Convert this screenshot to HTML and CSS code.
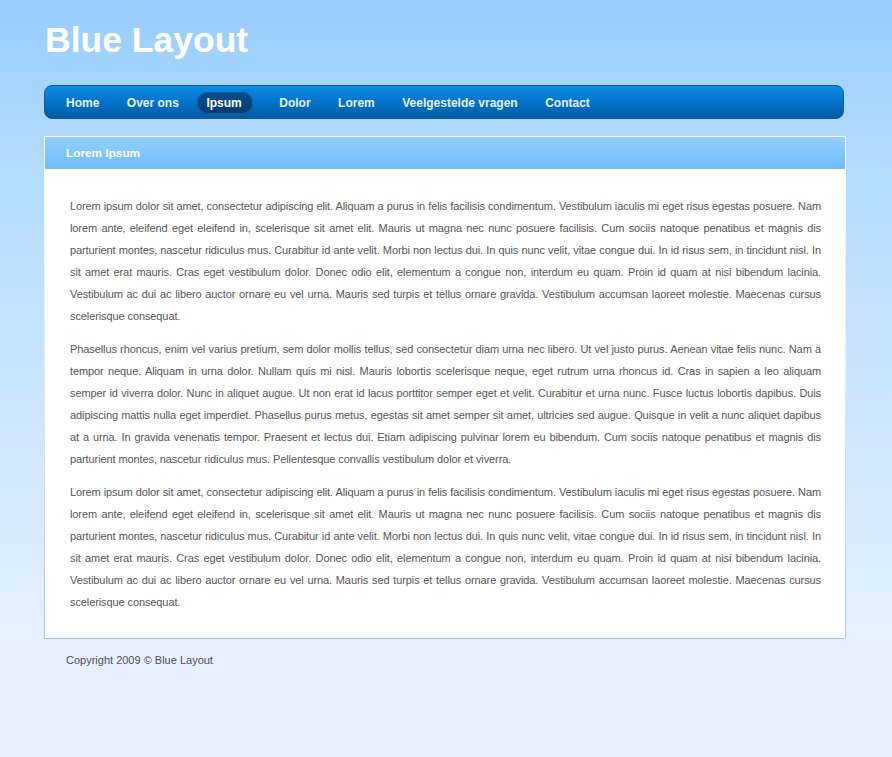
FILE: index.html
```html
<!DOCTYPE html>
<html>
<head>
<meta charset="utf-8">
<title>Blue Layout</title>
<link rel="stylesheet" href="styles.css">
</head>
<body>
<div class="wrap">
  <h1 class="logo">Blue Layout</h1>
  <nav class="nav">
    <a href="#">Home</a>
    <a href="#">Over ons</a>
    <a href="#" class="active">Ipsum</a>
    <a href="#">Dolor</a>
    <a href="#">Lorem</a>
    <a href="#">Veelgestelde vragen</a>
    <a href="#">Contact</a>
  </nav>
  <div class="box">
    <div class="box-head">Lorem Ipsum</div>
    <div class="box-body">
      <p>Lorem ipsum dolor sit amet, consectetur adipiscing elit. Aliquam a purus in felis facilisis condimentum. Vestibulum iaculis mi eget risus egestas posuere. Nam lorem ante, eleifend eget eleifend in, scelerisque sit amet elit. Mauris ut magna nec nunc posuere facilisis. Cum sociis natoque penatibus et magnis dis parturient montes, nascetur ridiculus mus. Curabitur id ante velit. Morbi non lectus dui. In quis nunc velit, vitae congue dui. In id risus sem, in tincidunt nisl. In sit amet erat mauris. Cras eget vestibulum dolor. Donec odio elit, elementum a congue non, interdum eu quam. Proin id quam at nisi bibendum lacinia. Vestibulum ac dui ac libero auctor ornare eu vel urna. Mauris sed turpis et tellus ornare gravida. Vestibulum accumsan laoreet molestie. Maecenas cursus scelerisque consequat.</p>
      <p>Phasellus rhoncus, enim vel varius pretium, sem dolor mollis tellus, sed consectetur diam urna nec libero. Ut vel justo purus. Aenean vitae felis nunc. Nam a tempor neque. Aliquam in urna dolor. Nullam quis mi nisl. Mauris lobortis scelerisque neque, eget rutrum urna rhoncus id. Cras in sapien a leo aliquam semper id viverra dolor. Nunc in aliquet augue. Ut non erat id lacus porttitor semper eget et velit. Curabitur et urna nunc. Fusce luctus lobortis dapibus. Duis adipiscing mattis nulla eget imperdiet. Phasellus purus metus, egestas sit amet semper sit amet, ultricies sed augue. Quisque in velit a nunc aliquet dapibus at a urna. In gravida venenatis tempor. Praesent et lectus dui. Etiam adipiscing pulvinar lorem eu bibendum. Cum sociis natoque penatibus et magnis dis parturient montes, nascetur ridiculus mus. Pellentesque convallis vestibulum dolor et viverra.</p>
      <p>Lorem ipsum dolor sit amet, consectetur adipiscing elit. Aliquam a purus in felis facilisis condimentum. Vestibulum iaculis mi eget risus egestas posuere. Nam lorem ante, eleifend eget eleifend in, scelerisque sit amet elit. Mauris ut magna nec nunc posuere facilisis. Cum sociis natoque penatibus et magnis dis parturient montes, nascetur ridiculus mus. Curabitur id ante velit. Morbi non lectus dui. In quis nunc velit, vitae congue dui. In id risus sem, in tincidunt nisl. In sit amet erat mauris. Cras eget vestibulum dolor. Donec odio elit, elementum a congue non, interdum eu quam. Proin id quam at nisi bibendum lacinia. Vestibulum ac dui ac libero auctor ornare eu vel urna. Mauris sed turpis et tellus ornare gravida. Vestibulum accumsan laoreet molestie. Maecenas cursus scelerisque consequat.</p>
    </div>
  </div>
  <div class="footer">Copyright 2009 © Blue Layout</div>
</div>
</body>
</html>
```
FILE: styles.css
```css
html, body {
  margin: 0;
  padding: 0;
}
body {
  min-height: 757px;
  font-family: "Liberation Sans", Arial, sans-serif;
  background: #e6f0fd linear-gradient(to bottom, #97cdfc 0px, #b4dcfd 170px, #e6f0fd 640px) no-repeat;
}
.wrap {
  width: 802px;
  padding-left: 44px;
}
.logo {
  margin: 0;
  padding: 20px 0 0 1px;
  height: 40px;
  line-height: 40px;
  font-size: 35.5px;
  font-weight: bold;
  color: #ffffff;
}
.nav {
  box-sizing: border-box;
  margin-top: 25px;
  width: 800px;
  height: 34px;
  border: 1px solid #1f5488;
  border-radius: 8px;
  background: linear-gradient(to bottom, #0a8be6 0%, #0273c8 50%, #005ca5 100%);
  display: flex;
  align-items: flex-start;
  gap: 9.5px;
  padding: 6px 0 0 12px;
}
.nav a {
  display: block;
  height: 22px;
  line-height: 23px;
  padding: 0 9px;
  border-radius: 11px;
  color: #e6f2ff;
  font-size: 12px;
  font-weight: bold;
  text-decoration: none;
}
.nav a.active {
  padding-right: 11px;
  margin-right: 8px;
  background: linear-gradient(to bottom, #0b4f8c 0%, #023a70 100%);
  box-shadow: inset 0 0 0 1px #1a5a96;
  color: #ffffff;
}
.box {
  margin-top: 17px;
  border: 1px solid #9ccbf8;
  border-image: linear-gradient(to bottom, #ffffff 0%, #e4f1fe 40%, #9ccbf8 100%) 1;
  background: #ffffff;
}
.box-head {
  height: 32px;
  line-height: 32px;
  padding-left: 21px;
  background: linear-gradient(to bottom, #95cffd 0%, #6cbdfc 100%);
  color: #ffffff;
  font-size: 11.8px;
  font-weight: bold;
}
.box-body {
  padding: 26px 24px 25px 25px;
}
.box-body p {
  margin: 0 0 11px;
  font-size: 11px;
  line-height: 22px;
  letter-spacing: -0.1px;
  color: #555555;
  text-align: justify;
}
.box-body p:last-child {
  margin-bottom: 0;
}
.footer {
  padding: 13px 0 0 22px;
  font-size: 11px;
  line-height: 16px;
  color: #505050;
}
```
